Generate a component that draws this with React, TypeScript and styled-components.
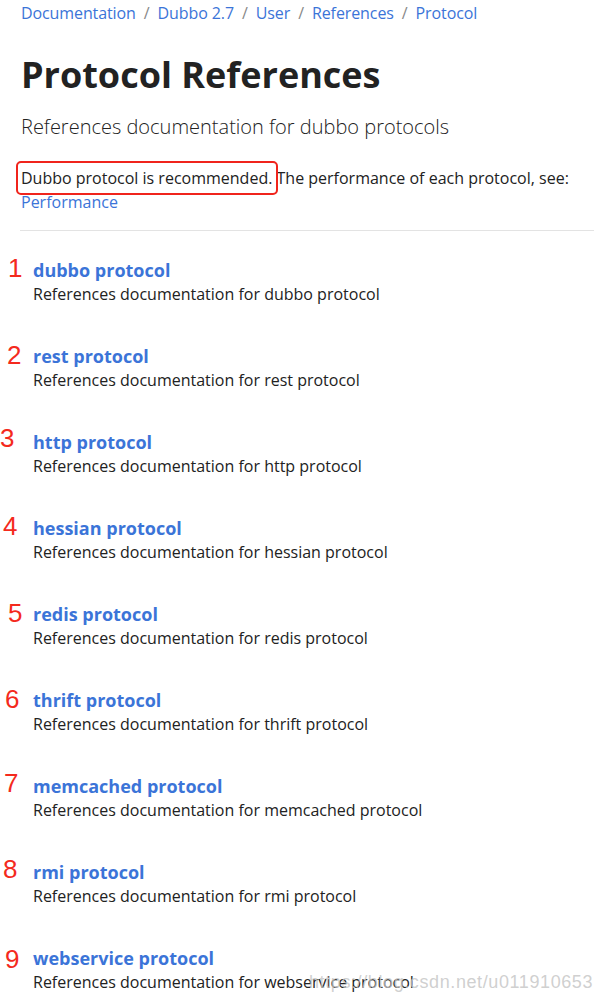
import React from "react";
import styled, { createGlobalStyle } from "styled-components";

const Global = createGlobalStyle`
  html, body { margin: 0; padding: 0; background: #fff; }
  body { font-family: "Open Sans", "DejaVu Sans", sans-serif; color: #222; overflow: hidden; }
`;

const Page = styled.div`
  position: relative;
  width: 594px;
  height: 1004px;
  overflow: hidden;
`;

const Content = styled.div`
  padding: 1px 0 0 21px;
`;

const Crumbs = styled.nav`
  display: flex;
  gap: 8px;
  font-size: 16px;
  line-height: 24px;
  color: #3b74d8;
  letter-spacing: -0.1px;
`;

const Sep = styled.span`
  color: #888;
`;

const Title = styled.h1`
  margin: 26px 0 0;
  font-size: 36px;
  line-height: 48px;
  font-weight: 700;
  color: #222;
`;

const Lead = styled.p`
  margin: 14px 0 0;
  font-size: 20px;
  font-weight: 300;
  line-height: 28px;
  color: #222;
`;

const Para = styled.p`
  margin: 25px 0 0;
  font-size: 16px;
  line-height: 24px;
  padding-right: 20px;
`;

const Boxed = styled.span`
  position: relative;
  &::after {
    content: "";
    position: absolute;
    left: -5px;
    right: -6px;
    top: -6px;
    bottom: -6px;
    border: 2px solid #f0241c;
    border-radius: 5px;
  }
`;

const Link = styled.a`
  color: #3b74d8;
  text-decoration: none;
`;

const Rule = styled.hr`
  margin: 16px 0 0 -1px;
  border: 0;
  border-top: 1px solid #e3e3e3;
`;

const List = styled.div`
  display: flex;
  flex-direction: column;
  gap: 38px;
  margin-top: 27px;
  padding-left: 12px;
`;

const Item = styled.div`
  position: relative;
`;

const ItemTitle = styled.a`
  display: block;
  font-size: 18px;
  line-height: 24px;
  font-weight: 700;
  color: #3b74d8;
  text-decoration: none;
`;

const ItemDesc = styled.div`
  font-size: 16px;
  line-height: 24px;
  color: #222;
`;

const Num = styled.span<{ $x: number; $y: number }>`
  position: absolute;
  left: ${(p) => p.$x - 33}px;
  top: ${(p) => p.$y}px;
  font-family: "Liberation Sans", Arial, sans-serif;
  font-size: 26px;
  line-height: 26px;
  color: #f42a1d;
`;

const Watermark = styled.div`
  position: absolute;
  left: 309px;
  top: 972px;
  font-family: "Liberation Sans", Arial, sans-serif;
  font-size: 18px;
  letter-spacing: 0.6px;
  color: rgba(195, 195, 195, 0.8);
`;

const items = [
  { name: "dubbo", x: 8, y: -3 },
  { name: "rest", x: 7, y: -2 },
  { name: "http", x: 0, y: -5 },
  { name: "hessian", x: 3, y: -3 },
  { name: "redis", x: 8, y: -2 },
  { name: "thrift", x: 5, y: -2 },
  { name: "memcached", x: 4, y: -4 },
  { name: "rmi", x: 3, y: -4 },
  { name: "webservice", x: 5, y: 0 },
];

export default function App() {
  return (
    <Page>
      <Global />
      <Content>
        <Crumbs>
          <span>Documentation</span>
          <Sep>/</Sep>
          <span>Dubbo 2.7</span>
          <Sep>/</Sep>
          <span>User</span>
          <Sep>/</Sep>
          <span>References</span>
          <Sep>/</Sep>
          <span>Protocol</span>
        </Crumbs>
        <Title>Protocol References</Title>
        <Lead>References documentation for dubbo protocols</Lead>
        <Para>
          <Boxed>Dubbo protocol is recommended.</Boxed> The performance of each protocol, see:{" "}
          <Link href="#">Performance</Link>
        </Para>
        <Rule />
        <List>
          {items.map((it, i) => (
            <Item key={it.name}>
              <Num $x={it.x} $y={it.y}>{i + 1}</Num>
              <ItemTitle href="#">{it.name} protocol</ItemTitle>
              <ItemDesc>References documentation for {it.name} protocol</ItemDesc>
            </Item>
          ))}
        </List>
      </Content>
      <Watermark>https://blog.csdn.net/u011910653</Watermark>
    </Page>
  );
}
